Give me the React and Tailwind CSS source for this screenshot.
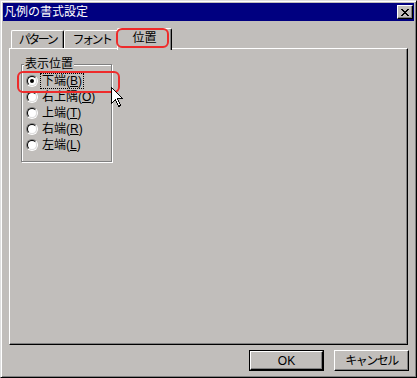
import React from 'react';

const FONT = "font-['Liberation_Sans','Noto_Sans_CJK_JP',sans-serif]";

const Radio = ({ checked }) => (
  <div className="w-[12px] h-[12px] rounded-full border border-t-[#808080] border-l-[#808080] border-b-white border-r-white shrink-0">
    <div className="w-full h-full rounded-full border border-t-black border-l-black border-b-[#dfdfdf] border-r-[#dfdfdf] bg-white flex items-center justify-center">
      {checked && <div className="w-[4px] h-[4px] rounded-full bg-black" />}
    </div>
  </div>
);

const CloseGlyph = () => (
  <svg width="8" height="7" viewBox="0 0 8 7" shapeRendering="crispEdges">
    <path
      fill="#000"
      d="M0 0h2v1H0zM6 0h2v1H6zM1 1h2v1H1zM5 1h2v1H5zM2 2h4v1H2zM3 3h2v1H3zM2 4h4v1H2zM1 5h2v1H1zM5 5h2v1H5zM0 6h2v1H0zM6 6h2v1H6z"
    />
  </svg>
);

const Cursor = () => (
  <svg width="13" height="20" viewBox="0 0 13 20" shapeRendering="crispEdges">
    <path
      d="M0.5 0.5 L0.5 16.5 L4.5 12.5 L7.5 19.5 L9.5 18.5 L6.5 11.5 L11.5 11.5 Z"
      fill="#fff"
      stroke="#000"
      strokeWidth="1"
    />
  </svg>
);

const options = [
  { label: '下端', key: 'B', checked: true },
  { label: '右上隅', key: 'O' },
  { label: '上端', key: 'T' },
  { label: '右端', key: 'R' },
  { label: '左端', key: 'L' },
];

const App = () => {
  return (
    <div className={`w-[417px] h-[378px] bg-[#c1bebb] border border-t-[#dfdfdf] border-l-[#dfdfdf] border-b-black border-r-black shadow-[inset_1px_1px_#fff,inset_-1px_-1px_#808080] p-[2px] flex flex-col text-[12px] text-black ${FONT}`}>
      {/* タイトルバー */}
      <div className="h-[18px] bg-[#000080] flex items-center justify-between pl-px pr-[1px]">
        <span className="text-white leading-none">凡例の書式設定</span>
        <div className="w-[16px] h-[14px] bg-[#c1bebb] border border-t-white border-l-white border-b-black border-r-black shadow-[inset_-1px_-1px_#808080] flex items-center justify-center">
          <CloseGlyph />
        </div>
      </div>

      {/* タブ */}
      <div className="mt-[7px] ml-[6px] h-[20px] flex items-end relative z-10">
        <div className="ml-[2px] w-[53px] h-[18px] border-t border-l border-r border-t-white border-l-white border-r-black shadow-[inset_-1px_0_#808080] rounded-t-[2px] flex items-center justify-center tracking-[-2.5px] leading-none">
          パターン
        </div>
        <div className="w-[55px] h-[18px] border-t border-l border-r border-t-white border-l-white border-r-black shadow-[inset_-1px_0_#808080] rounded-t-[2px] flex items-center justify-center tracking-[-2.5px] leading-none">
          フォント
        </div>
        <div className="relative -ml-[2px] w-[55px] h-[22px] -mb-[2px] bg-[#c1bebb] border-t border-l border-r border-t-white border-l-white border-r-black shadow-[inset_-1px_0_#808080] rounded-t-[2px] flex items-start justify-center pt-[3px] leading-none">
          位置
          <div className="absolute left-[-2px] top-[-1px] w-[53px] h-[20px] border-2 border-[#ee2b2b] rounded-[6px]" />
        </div>
      </div>

      {/* パネル */}
      <div className="ml-[6px] w-[399px] h-[297px] border border-t-white border-l-white border-b-black border-r-black shadow-[inset_-1px_-1px_#808080] relative">
        <fieldset className="ml-[11px] mt-[8px] w-[91px] h-[105px] border border-[#808080] shadow-[1px_1px_0_#fff,inset_1px_1px_0_#fff]">
          <legend className="ml-[2px] px-px bg-[#c1bebb] leading-[14px]">表示位置</legend>
          <div className="flex flex-col pt-[2px] pl-[4px]">
            {options.map((o) => (
              <div key={o.key} className="h-[16px] flex items-center">
                <Radio checked={o.checked} />
                <span
                  className={`ml-[2px] px-px leading-[14px] border ${
                    o.checked ? 'border-dotted border-black' : 'border-transparent'
                  }`}
                >
                  {o.label}(<span className="underline">{o.key}</span>)
                </span>
              </div>
            ))}
          </div>
        </fieldset>
        <div className="absolute left-[7px] top-[22px] w-[103px] h-[22px] border-2 border-[#ee2b2b] rounded-[6px]" />
        <div className="absolute left-[101px] top-[38px]">
          <Cursor />
        </div>
      </div>

      {/* ボタン */}
      <div className="mt-[5px] mr-[5px] flex justify-end gap-[10px]">
        <button className="w-[75px] h-[21px] border border-black bg-[#c1bebb] p-0">
          <div className="w-full h-full border border-t-white border-l-white border-b-black border-r-black shadow-[inset_-1px_-1px_#808080] flex items-center justify-center leading-none">
            OK
          </div>
        </button>
        <button className="w-[75px] h-[21px] border border-t-white border-l-white border-b-black border-r-black shadow-[inset_-1px_-1px_#808080] bg-[#c1bebb] flex items-center justify-center leading-none tracking-[-1.5px]">
          キャンセル
        </button>
      </div>
    </div>
  );
};

export default App;
